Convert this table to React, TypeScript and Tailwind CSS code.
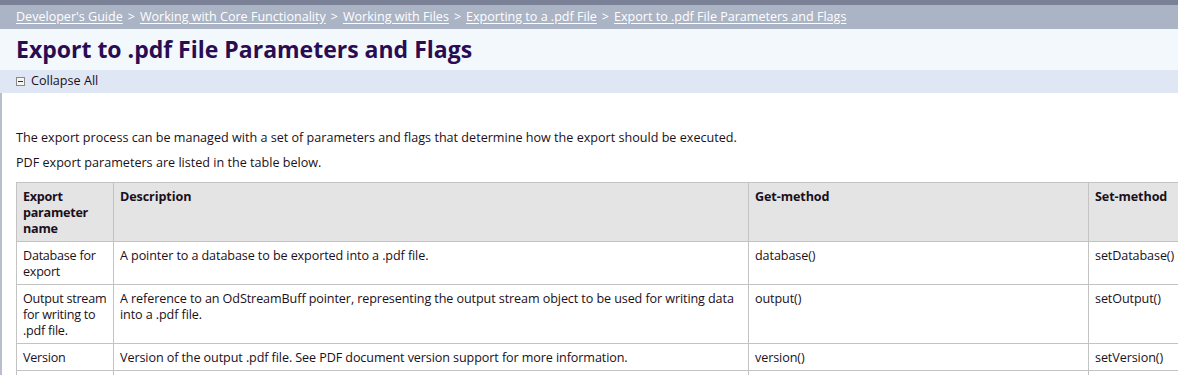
import React from "react";

interface Row {
  name: string;
  description: string;
  get: string;
  set: string;
}

const rows: Row[] = [
  {
    name: "Database for export",
    description: "A pointer to a database to be exported into a .pdf file.",
    get: "database()",
    set: "setDatabase()",
  },
  {
    name: "Output stream for writing to .pdf file.",
    description:
      "A reference to an OdStreamBuff pointer, representing the output stream object to be used for writing data into a .pdf file.",
    get: "output()",
    set: "setOutput()",
  },
  {
    name: "Version",
    description: "Version of the output .pdf file. See PDF document version support for more information.",
    get: "version()",
    set: "setVersion()",
  },
];

const crumbs = [
  "Developer's Guide",
  "Working with Core Functionality",
  "Working with Files",
  "Exporting to a .pdf File",
  "Export to .pdf File Parameters and Flags",
];

const font = { fontFamily: "'Open Sans', 'Noto Sans', sans-serif" };

const cell = "border border-[#c3c3c3] align-top pl-[6px] pr-[5px] pt-[6px] pb-[4px]";

const App: React.FC = () => {
  return (
    <div className="w-full h-[375px] overflow-hidden bg-white text-[12.6px] text-[#1a1020]" style={font}>
      <div className="h-[5px] bg-[#7a8196]" />

      {/* Breadcrumbs */}
      <div className="h-[24px] bg-[#abb4c5] flex items-center px-4 text-white text-[12.55px]">
        {crumbs.map((c, i) => (
          <React.Fragment key={c}>
            {i > 0 && <span className="mx-[5px]">&gt;</span>}
            <a className="underline underline-offset-2">{c}</a>
          </React.Fragment>
        ))}
      </div>

      <div className="h-[41px] bg-[#f3f8fd] flex items-center px-4">
        <h1 className="text-[23px] font-bold text-[#2a0c52]">Export to .pdf File Parameters and Flags</h1>
      </div>

      <div className="h-[23px] bg-[#dfe6f4] flex items-center px-4 gap-[6px]">
        <span className="w-[9px] h-[9px] border border-[#8a8a8a] bg-[#f4f4f4] flex items-center justify-center">
          <span className="w-[5px] h-px bg-[#333]" />
        </span>
        <span>Collapse All</span>
      </div>

      {/* Body */}
      <div className="border-l-2 border-[#b9becb] pl-[14px] pt-[37px] h-full">
        <p className="leading-[16px]">
          The export process can be managed with a set of parameters and flags that determine how the export should be
          executed.
        </p>
        <p className="leading-[16px] mt-[9px]">PDF export parameters are listed in the table below.</p>

        <table className="mt-[11px] border-collapse table-fixed w-[1260px] leading-[16px] tracking-[-0.1px]">
          <colgroup>
            <col className="w-[97px]" />
            <col className="w-[635px]" />
            <col className="w-[340px]" />
            <col className="w-[188px]" />
          </colgroup>
          <thead>
            <tr className="bg-[#e4e4e4]">
              <th className={`${cell} text-left font-bold tracking-[-0.25px]`}>Export parameter name</th>
              <th className={`${cell} text-left font-bold`}>Description</th>
              <th className={`${cell} text-left font-bold`}>Get-method</th>
              <th className={`${cell} text-left font-bold`}>Set-method</th>
            </tr>
          </thead>
          <tbody>
            {rows.map((r) => (
              <tr key={r.name}>
                <td className={`${cell} tracking-[-0.25px]`}>{r.name}</td>
                <td className={cell}>{r.description}</td>
                <td className={cell}>{r.get}</td>
                <td className={cell}>{r.set}</td>
              </tr>
            ))}
            <tr className="h-[20px]">
              <td className="border border-[#c3c3c3]" />
              <td className="border border-[#c3c3c3]" />
              <td className="border border-[#c3c3c3]" />
              <td className="border border-[#c3c3c3]" />
            </tr>
          </tbody>
        </table>
      </div>
    </div>
  );
};

export default App;
